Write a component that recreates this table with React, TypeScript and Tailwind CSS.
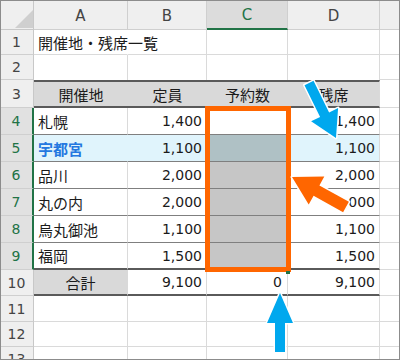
import React from "react";

const JP = "font-['Noto_Sans_CJK_JP',sans-serif]";
const NUM = "font-['DejaVu_Sans','Noto_Sans_CJK_JP',sans-serif]";

function Cell({ className, children }: { className: string; children?: React.ReactNode }) {
  return <div className={"shrink-0 flex items-center leading-none whitespace-nowrap " + className}>{children}</div>;
}

const dataRows = [
  { n: 4, a: "札幌", b: "1,400", d: "1,400" },
  { n: 5, a: "宇都宮", b: "1,100", d: "1,100", hl: true },
  { n: 6, a: "品川", b: "2,000", d: "2,000" },
  { n: 7, a: "丸の内", b: "2,000", d: "2,000" },
  { n: 8, a: "烏丸御池", b: "1,100", d: "1,100" },
  { n: 9, a: "福岡", b: "1,500", d: "1,500", last: true },
];

function RowHead({ n, sel }: { n: number; sel?: boolean }) {
  return (
    <Cell
      className={
        "w-[34px] justify-center text-[14px] border-b border-b-[#cfcfcf] " +
        NUM +
        (sel
          ? " bg-[#e1e1e1] border-r-2 border-r-[#217346] text-[#217346]"
          : " bg-[#efefef] border-r border-r-[#c8c8c8] text-[#444]")
      }
    >
      {n}
    </Cell>
  );
}

function EmptyRow({ n, h }: { n: number; h: string }) {
  return (
    <div className={"flex " + h}>
      <RowHead n={n} />
      <Cell className="w-[94px] border-r border-b border-[#dadada]" />
      <Cell className="w-[79px] border-r border-b border-[#dadada]" />
      <Cell className="w-[81px] border-r border-b border-[#dadada]" />
      <Cell className="w-[92px] border-r border-b border-[#dadada]" />
      <Cell className="flex-1 border-b border-[#dadada]" />
    </div>
  );
}

export default function App() {
  return (
    <div className="relative w-[400px] h-[360px] overflow-hidden bg-white text-[#1b1b1b]">
      <div className="flex flex-col">
        {/* column headers */}
        <div className="flex h-[30px]">
          <Cell className="w-[34px] relative bg-[#efefef] border-r border-b border-[#c8c8c8]">
            <svg className="absolute right-0 bottom-[1px]" width="18" height="18" viewBox="0 0 18 18">
              <polygon points="18,0 18,18 0,18" fill="#cfcfcf" />
            </svg>
          </Cell>
          <Cell className={"w-[94px] justify-center pt-[3px] bg-[#efefef] border-r border-b border-[#cfcfcf] text-[15px] text-[#444] " + NUM}>A</Cell>
          <Cell className={"w-[79px] justify-center pt-[3px] bg-[#efefef] border-r border-b border-[#cfcfcf] text-[15px] text-[#444] " + NUM}>B</Cell>
          <Cell className={"w-[81px] justify-center pt-[3px] bg-[#dcdcdc] border-r border-r-[#cfcfcf] border-b-2 border-b-[#217346] text-[15px] text-[#217346] " + NUM}>C</Cell>
          <Cell className={"w-[92px] justify-center pt-[3px] bg-[#efefef] border-r border-b border-[#cfcfcf] text-[15px] text-[#444] " + NUM}>D</Cell>
          <Cell className="flex-1 bg-[#efefef] border-b border-[#cfcfcf]" />
        </div>

        {/* row 1 */}
        <div className="flex h-[25px]">
          <RowHead n={1} />
          <Cell className={"w-[94px] pl-[4px] overflow-visible relative z-10 border-r border-r-white border-b border-b-[#dadada] text-[15px] " + JP}>
            開催地・残席一覧
          </Cell>
          <Cell className="w-[79px] border-r border-b border-[#dadada]" />
          <Cell className="w-[81px] border-r border-b border-[#dadada]" />
          <Cell className="w-[92px] border-r border-b border-[#dadada]" />
          <Cell className="flex-1 border-b border-[#dadada]" />
        </div>

        {/* row 2 */}
        <div className="flex h-[25px]">
          <RowHead n={2} />
          <Cell className="w-[94px] border-r border-[#dadada]" />
          <Cell className="w-[79px] border-r border-[#dadada]" />
          <Cell className="w-[81px] border-r border-[#dadada]" />
          <Cell className="w-[92px] border-r border-[#dadada]" />
          <Cell className="flex-1 border-b border-[#dadada]" />
        </div>

        {/* row 3 header */}
        <div className="flex h-[28px]">
          <RowHead n={3} />
          <Cell className={"w-[94px] justify-center bg-[#d9d9d9] border-y-2 border-y-[#5a5a5a] text-[15px] " + JP}>開催地</Cell>
          <Cell className={"w-[79px] justify-center bg-[#d9d9d9] border-y-2 border-y-[#5a5a5a] text-[15px] " + JP}>定員</Cell>
          <Cell className={"w-[81px] justify-center bg-[#d9d9d9] border-y-2 border-y-[#5a5a5a] text-[15px] " + JP}>予約数</Cell>
          <Cell className={"w-[92px] justify-center bg-[#d9d9d9] border-y-2 border-y-[#5a5a5a] border-r border-r-[#dadada] text-[15px] " + JP}>残席</Cell>
          <Cell className="flex-1 border-b border-[#dadada]" />
        </div>

        {/* data rows */}
        {dataRows.map((r) => {
          const bottom = r.last ? " border-b-2 border-b-[#5a5a5a]" : " border-b border-b-[#7f7f7f]";
          const bg = r.hl ? " bg-[#e0f4fc]" : "";
          const vr = r.hl ? " border-r border-r-[#e0f4fc]" : " border-r border-r-[#dadada]";
          const cBg = r.n === 4 ? "" : r.hl ? " bg-[#afc1c5]" : " bg-[#c6c6c6]";
          return (
            <div key={r.n} className="flex h-[27px]">
              <RowHead n={r.n} sel />
              <Cell
                className={
                  "w-[94px] pl-[4px] text-[15px] " +
                  JP +
                  bottom +
                  bg +
                  vr +
                  (r.hl ? " font-bold text-[#2478e0]" : "")
                }
              >
                {r.a}
              </Cell>
              <Cell className={"w-[79px] justify-end pr-[4px] text-[14px] " + NUM + bottom + bg + vr}>{r.b}</Cell>
              <Cell className={"w-[81px]" + bottom + cBg + vr} />
              <Cell className={"w-[92px] justify-end pr-[4px] text-[14px] border-r border-r-[#dadada] " + NUM + bottom + bg}>{r.d}</Cell>
              <Cell className="flex-1 border-b border-[#dadada]" />
            </div>
          );
        })}

        {/* row 10 total */}
        <div className="flex h-[26px]">
          <RowHead n={10} />
          <Cell className={"w-[94px] justify-center bg-[#d9d9d9] border-b-2 border-b-[#5a5a5a] border-r border-r-[#d9d9d9] text-[15px] " + JP}>合計</Cell>
          <Cell className={"w-[79px] justify-end pr-[4px] border-b-2 border-b-[#5a5a5a] border-r border-r-[#dadada] text-[14px] " + NUM}>9,100</Cell>
          <Cell className={"w-[81px] justify-end pr-[5px] border-b-2 border-b-[#5a5a5a] border-r border-r-[#dadada] text-[14px] " + NUM}>0</Cell>
          <Cell className={"w-[92px] justify-end pr-[4px] border-b-2 border-b-[#5a5a5a] border-r border-r-[#dadada] text-[14px] " + NUM}>9,100</Cell>
          <Cell className="flex-1 border-b border-[#dadada]" />
        </div>

        <EmptyRow n={11} h="h-[26px]" />
        <EmptyRow n={12} h="h-[25px]" />
        <EmptyRow n={13} h="h-[25px]" />
      </div>

      {/* selection highlight box */}
      <div className="absolute left-[205px] top-[106px] w-[86px] h-[166px] border-[5px] border-[#ff6600] pointer-events-none" />
      <div className="absolute left-[286px] top-[271px] w-[4px] h-[3px] bg-[#217346]" />

      {/* arrows */}
      <svg className="absolute left-0 top-0 pointer-events-none" width="400" height="360" viewBox="0 0 400 360">
        <polygon
          points="313.5,80.8 329.1,112.5 338.1,108.1 336,138 311.1,121.3 320.1,116.9 304.5,85.2"
          fill="#00a8ee"
          stroke="#ffffff"
          strokeWidth="3"
          strokeLinejoin="round"
          paintOrder="stroke"
        />
        <polygon
          points="348.9,201.8 319.4,185.4 324.3,176.6 292,177 308.7,204.6 313.6,195.8 343.1,212.2"
          fill="#ff6600"
          stroke="#ffffff"
          strokeWidth="3"
          strokeLinejoin="round"
          paintOrder="stroke"
        />
        <polygon
          points="275,352 275,323 267,323 280,293 293,323 285,323 285,352"
          fill="#00a8ee"
          stroke="#ffffff"
          strokeWidth="3"
          strokeLinejoin="round"
          paintOrder="stroke"
        />
      </svg>

      <div className="absolute inset-0 border border-[#8c8c8c] pointer-events-none" />
    </div>
  );
}
